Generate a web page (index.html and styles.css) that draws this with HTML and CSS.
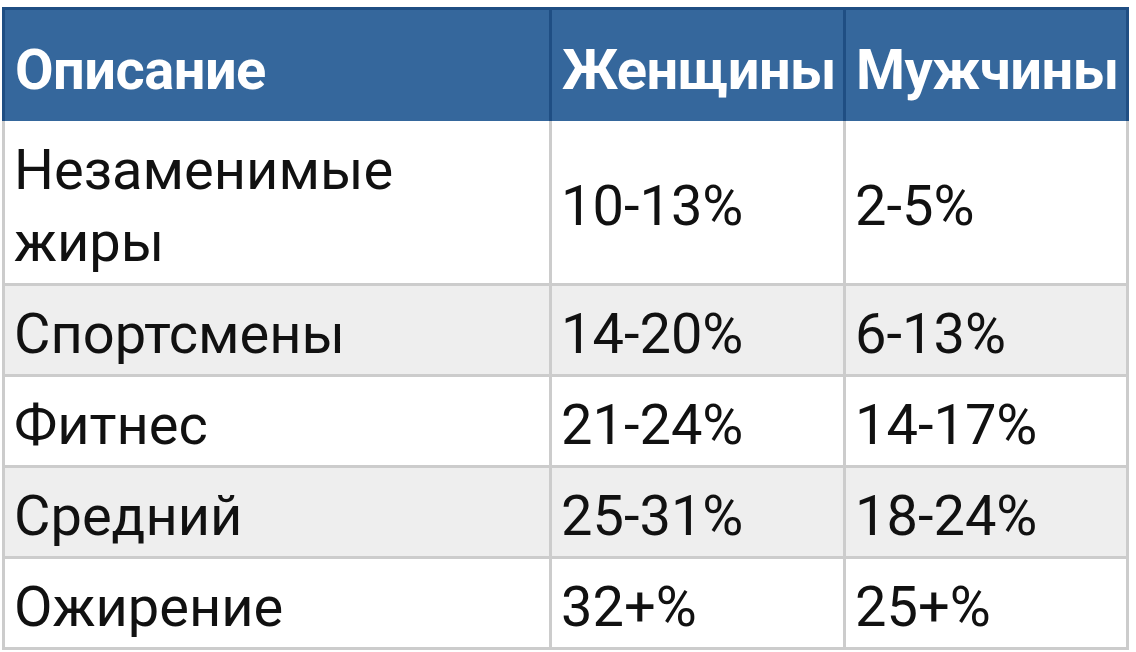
FILE: index.html
```html
<!DOCTYPE html>
<html lang="ru">
<head>
<meta charset="utf-8">
<title>Процент жира</title>
<link rel="stylesheet" href="styles.css">
</head>
<body>
<table class="fat-table">
  <colgroup>
    <col class="c-desc">
    <col class="c-women">
    <col class="c-men">
  </colgroup>
  <thead>
    <tr>
      <th>Описание</th>
      <th>Женщины</th>
      <th>Мужчины</th>
    </tr>
  </thead>
  <tbody>
    <tr class="tall">
      <td>Незаменимые<br>жиры</td>
      <td>10-13%</td>
      <td>2-5%</td>
    </tr>
    <tr class="alt">
      <td>Спортсмены</td>
      <td>14-20%</td>
      <td>6-13%</td>
    </tr>
    <tr>
      <td>Фитнес</td>
      <td>21-24%</td>
      <td>14-17%</td>
    </tr>
    <tr class="alt">
      <td>Средний</td>
      <td>25-31%</td>
      <td>18-24%</td>
    </tr>
    <tr>
      <td>Ожирение</td>
      <td>32+%</td>
      <td>25+%</td>
    </tr>
  </tbody>
</table>
</body>
</html>
```
FILE: styles.css
```css
html, body {
  margin: 0;
  padding: 0;
  background: #ffffff;
}

body {
  padding: 7px 0 0 2px;
  font-family: Roboto, "Noto Sans", "Liberation Sans", sans-serif;
}

.fat-table {
  border-collapse: separate;
  border-spacing: 0;
  table-layout: fixed;
  width: 1127px;
  font-size: 56px;
  line-height: 72px;
  color: #111111;
}

.c-desc { width: 547px; }
.c-women { width: 294px; }
.c-men { width: 286px; }

.fat-table th {
  background: #35679c;
  color: #ffffff;
  font-weight: 700;
  text-align: left;
  padding: 24px 8px 15px 10px;
  border-top: 3px solid #1f4e83;
  border-left: 3px solid #1f4e83;
  letter-spacing: -0.5px;
}

.fat-table th:last-child {
  border-right: 3px solid #1f4e83;
}

.fat-table td {
  text-align: left;
  vertical-align: middle;
  padding: 12px 8px 4px 9px;
  border-top: 3px solid #cccccc;
  border-left: 3px solid #cccccc;
  background: #ffffff;
}

.fat-table tbody tr:first-child td {
  border-top: 0;
  padding-top: 13px;
  padding-bottom: 5px;
}

.fat-table td:last-child {
  border-right: 3px solid #cccccc;
}

.fat-table tbody tr:last-child td {
  border-bottom: 3px solid #cccccc;
}

.fat-table tr.alt td {
  background: #eeeeee;
}
```
